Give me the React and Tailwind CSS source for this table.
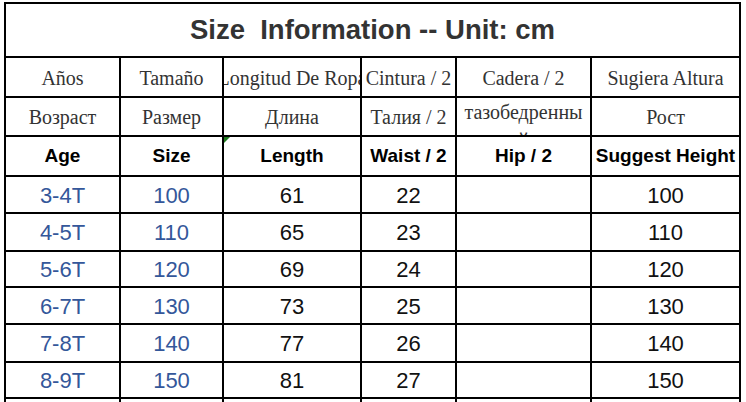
import React from 'react';

// Size chart rows
const rows = [
  ['3-4T', '100', '61', '22', '', '100'],
  ['4-5T', '110', '65', '23', '', '110'],
  ['5-6T', '120', '69', '24', '', '120'],
  ['6-7T', '130', '73', '25', '', '130'],
  ['7-8T', '140', '77', '26', '', '140'],
  ['8-9T', '150', '81', '27', '', '150'],
];

const serif = "font-['Liberation_Serif',serif]";
const sans = "font-['Liberation_Sans',Arial,sans-serif]";

const Cell = ({ children, className = '' }) => (
  <div className={`bg-white flex items-center justify-center overflow-hidden whitespace-nowrap ${className}`}>
    {children}
  </div>
);

const App = () => {
  const spanish = ['Años', 'Tamaño', 'Longitud De Ropa', 'Cintura / 2', 'Cadera / 2', 'Sugiera Altura'];
  const english = ['Age', 'Size', 'Length', 'Waist / 2', 'Hip / 2', 'Suggest Height'];

  return (
    <div className="w-[746px] h-[402px] overflow-hidden bg-white pt-[2px] pl-[4px]">
      <div className="grid grid-cols-[113px_101px_136px_93px_133px_147px] grid-rows-[52px_38px_37px_38px_35px_36px_34px_35px_36px_34px_35px] gap-[2px] bg-black p-[2px] w-max">
        {/* Title */}
        <Cell className={`col-span-6 ${sans} font-bold text-[27.5px] text-[#333] whitespace-pre`}>
          {'Size  Information -- Unit: cm'}
        </Cell>

        {/* Spanish labels */}
        {spanish.map((t) => (
          <Cell key={t} className={`${serif} text-[20px] text-[#333] pt-[2px]`}>
            {t}
          </Cell>
        ))}

        {/* Russian labels */}
        <Cell className={`${serif} text-[20px] text-[#333]`}>Возраст</Cell>
        <Cell className={`${serif} text-[20px] text-[#333]`}>Размер</Cell>
        <Cell className={`${serif} text-[20px] text-[#333]`}>Длина</Cell>
        <Cell className={`${serif} text-[20px] text-[#333]`}>Талия / 2</Cell>
        <div className={`bg-white flex flex-col items-center overflow-hidden ${serif} text-[20px] leading-[24px] text-[#333] pt-[2px]`}>
          <span>тазобедренны</span>
          <span className="mt-[4px]">й</span>
        </div>
        <Cell className={`${serif} text-[20px] text-[#333]`}>Рост</Cell>

        {/* English labels */}
        {english.map((t) => (
          <Cell key={t} className={`${sans} font-bold text-[19px] text-black relative`}>
            {t === 'Length' && (
              <svg className="absolute top-0 left-0" width="6" height="6" viewBox="0 0 6 6">
                <polygon points="0,0 6,0 0,6" fill="#1f7a1f" />
              </svg>
            )}
            {t}
          </Cell>
        ))}

        {/* Data */}
        {rows.map((r) =>
          r.map((v, i) => (
            <Cell
              key={r[0] + i}
              className={`${sans} text-[22px] pt-[1px] ${i < 2 ? 'text-[#34579a]' : 'text-[#111]'}`}
            >
              {v}
            </Cell>
          ))
        )}

        {/* next row, cut off */}
        {[0, 1, 2, 3, 4, 5].map((i) => (
          <Cell key={'x' + i} />
        ))}
      </div>
    </div>
  );
};

export default App;
